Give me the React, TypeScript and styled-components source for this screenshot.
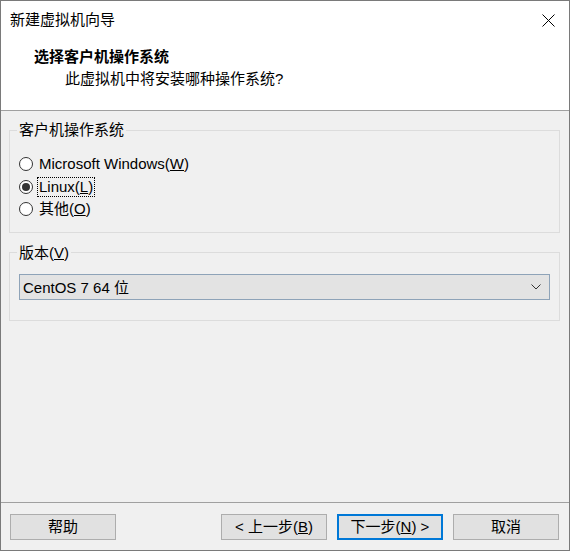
import React from "react";
import styled, { createGlobalStyle } from "styled-components";

const Global = createGlobalStyle`
  html, body { margin: 0; padding: 0; background: #ffffff; }
  body {
    font-family: "Liberation Sans", "Noto Sans CJK SC", sans-serif;
    font-size: 15px;
    color: #000;
  }
  * { box-sizing: border-box; }
`;

const Window = styled.div`
  width: 570px;
  height: 551px;
  border: 1px solid #7a7a7a;
  display: flex;
  flex-direction: column;
  background: #f0f0f0;
`;

const Header = styled.div`
  background: #ffffff;
  border-bottom: 1px solid #a0a0a0;
  padding-bottom: 21px;
`;

const TitleBar = styled.div`
  height: 38px;
  display: flex;
  align-items: center;
  justify-content: space-between;
  padding-left: 9px;
  padding-right: 14px;
`;

const TitleText = styled.span`
  line-height: 20px;
`;

const CloseBtn = styled.div`
  width: 14px;
  height: 14px;
  display: flex;
  align-items: center;
  justify-content: center;
`;

const Heading = styled.div`
  margin-top: 8px;
  padding-left: 33px;
  font-weight: bold;
  line-height: 20px;
`;

const SubHeading = styled.div`
  margin-top: 2px;
  padding-left: 64px;
  line-height: 20px;
`;

const Body = styled.div`
  flex: 1;
  padding: 9px 9px 0 8px;
  display: flex;
  flex-direction: column;
  gap: 10px;
`;

const Group = styled.fieldset<{ $pt: number; $pb: number }>`
  margin: 0;
  border: 1px solid #dcdcdc;
  padding: ${(p) => p.$pt}px 9px ${(p) => p.$pb}px 7px;
  min-width: 0;
`;

const Legend = styled.legend`
  padding: 0 2px;
  line-height: 20px;
`;

const RadioList = styled.div`
  display: flex;
  flex-direction: column;
  padding-left: 2px;
`;

const RadioRow = styled.label`
  display: flex;
  align-items: center;
  height: 22.5px;
  gap: 6px;
`;

const RadioCircle = styled.span<{ $checked?: boolean }>`
  flex: 0 0 14px;
  width: 14px;
  height: 14px;
  border-radius: 50%;
  border: 1px solid #333;
  background: #fff;
  display: flex;
  align-items: center;
  justify-content: center;
  &::after {
    content: "";
    width: 8px;
    height: 8px;
    border-radius: 50%;
    background: ${(p) => (p.$checked ? "#333" : "transparent")};
  }
`;

const RadioLabel = styled.span<{ $focus?: boolean }>`
  line-height: 18px;
  padding: 0 1px;
  margin-left: -1px;
  outline: ${(p) => (p.$focus ? "1px dotted #000" : "none")};
`;

const Combo = styled.div`
  height: 26px;
  margin-left: 2px;
  border: 1px solid #8ea3b8;
  background: #e3e3e3;
  display: flex;
  align-items: center;
  justify-content: space-between;
  padding: 0 8px 0 3px;
`;

const Footer = styled.div`
  border-top: 1px solid #a0a0a0;
  padding: 11px 10px 10px 9px;
  display: flex;
  align-items: center;
`;

const ButtonGroup = styled.div`
  margin-left: auto;
  display: flex;
  gap: 10px;
`;

const Button = styled.button<{ $default?: boolean }>`
  width: 106px;
  height: 26px;
  font-family: inherit;
  font-size: 15px;
  color: #000;
  background: #e1e1e1;
  border: ${(p) => (p.$default ? "2px solid #0078d7" : "1px solid #adadad")};
  padding: 0;
  display: flex;
  align-items: center;
  justify-content: center;
  line-height: 20px;
`;

export default function App() {
  return (
    <>
      <Global />
      <Window>
        <Header>
          <TitleBar>
            <TitleText>新建虚拟机向导</TitleText>
            <CloseBtn>
              <svg width="13" height="13" viewBox="0 0 13 13">
                <path d="M0.5 0.5 L12.5 12.5 M12.5 0.5 L0.5 12.5" stroke="#000" strokeWidth="1" />
              </svg>
            </CloseBtn>
          </TitleBar>
          <Heading>选择客户机操作系统</Heading>
          <SubHeading>此虚拟机中将安装哪种操作系统?</SubHeading>
        </Header>
        <Body>
          <Group $pt={13} $pb={11}>
            <Legend>客户机操作系统</Legend>
            <RadioList>
              <RadioRow>
                <RadioCircle />
                <RadioLabel>
                  Microsoft Windows(<u>W</u>)
                </RadioLabel>
              </RadioRow>
              <RadioRow>
                <RadioCircle $checked />
                <RadioLabel $focus>
                  Linux(<u>L</u>)
                </RadioLabel>
              </RadioRow>
              <RadioRow>
                <RadioCircle />
                <RadioLabel>
                  其他(<u>O</u>)
                </RadioLabel>
              </RadioRow>
            </RadioList>
          </Group>
          <Group $pt={11} $pb={20}>
            <Legend>
              版本(<u>V</u>)
            </Legend>
            <Combo>
              <span>CentOS 7 64 位</span>
              <svg width="10" height="6" viewBox="0 0 10 6">
                <path d="M0.5 0.5 L5 5 L9.5 0.5" stroke="#333" strokeWidth="1" fill="none" />
              </svg>
            </Combo>
          </Group>
        </Body>
        <Footer>
          <Button>帮助</Button>
          <ButtonGroup>
            <Button>
              &lt; 上一步(<u>B</u>)
            </Button>
            <Button $default>
              下一步(<u>N</u>) &gt;
            </Button>
            <Button>取消</Button>
          </ButtonGroup>
        </Footer>
      </Window>
    </>
  );
}
